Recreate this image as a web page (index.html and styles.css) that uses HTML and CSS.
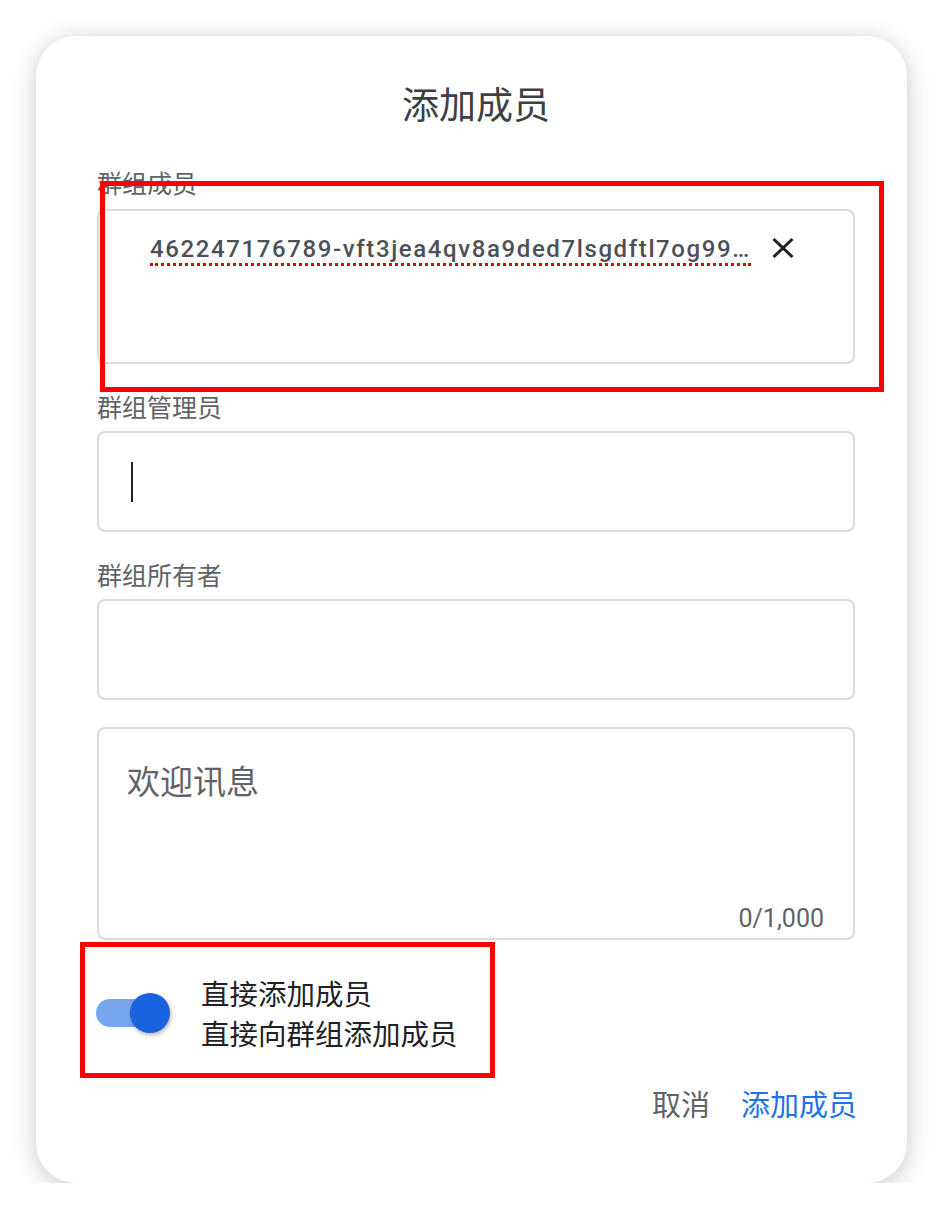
FILE: index.html
```html
<!DOCTYPE html>
<html>
<head>
    <meta charset="utf-8" />
    <title>添加成员</title>
    <meta name="viewport" content="width=device-width, initial-scale=1">
    <link rel="stylesheet" href="styles.css">
</head>
<body>
    <div id="addMember">
        <h2>添加成员</h2>

        <p class="label first">群组成员</p>
        <div class="box box-tall">
            <div class="chip">
                <span class="chip-text">462247176789-vft3jea4qv8a9ded7lsgdftl7og99…</span>
                <svg class="chip-close" width="22" height="20" viewBox="0 0 22 20">
                    <path d="M1.5 1 L20.5 19 M20.5 1 L1.5 19" stroke="#202124" stroke-width="3" fill="none"/>
                </svg>
            </div>
        </div>

        <p class="label">群组管理员</p>
        <div class="box box-focus">
            <span class="caret"></span>
        </div>

        <p class="label">群组所有者</p>
        <div class="box"></div>

        <div class="box box-area">
            <span class="placeholder">欢迎讯息</span>
            <span class="counter">0/1,000</span>
        </div>

        <div class="switch-row">
            <div class="switch">
                <span class="track"></span>
                <span class="knob"></span>
            </div>
            <div class="switch-text">
                <span>直接添加成员</span>
                <span>直接向群组添加成员</span>
            </div>
        </div>

        <div class="actions">
            <span class="btn">取消</span>
            <span class="btn btn-primary">添加成员</span>
        </div>
    </div>

    <!-- 标注框 -->
    <div class="mark mark-members"></div>
    <div class="mark mark-switch"></div>
</body>
</html>
```

FILE: styles.css
```css
body,h2,p{
    margin: 0;
}
body{
    background: #fff;
    font-family: "Noto Sans CJK SC", Roboto, sans-serif;
    color: #202124;
}
#addMember{
    box-sizing: border-box;
    margin: 36px 0 0 36px;
    padding: 43px 52px 0 61px;
    width: 871px;
    height: 1147px;
    background: #fff;
    border-radius: 40px;
    box-shadow: 0 4px 24px rgba(0,0,0,.22);
}
#addMember h2{
    font-size: 37px;
    font-weight: 400;
    line-height: 48px;
    text-align: center;
    color: #3c4043;
}
.label{
    margin: 26px 0 9px;
    font-size: 25px;
    line-height: 32px;
    color: #5f6368;
}
.label.first{
    margin: 39px 0 11px;
}
.box{
    box-sizing: border-box;
    height: 101px;
    border: 2px solid #dadce0;
    border-radius: 8px;
}
.box-tall{
    height: 155px;
    padding: 24px 0 0 51px;
}
.chip{
    display: flex;
    align-items: flex-start;
    gap: 21px;
}
.chip-text{
    font-family: Roboto, "Noto Sans CJK SC", sans-serif;
    font-size: 24px;
    font-weight: 500;
    letter-spacing: 1.6px;
    line-height: 28px;
    color: #4d5156;
    border-bottom: 3px dotted #d00;
}
.chip-close{
    margin-top: 3px;
}
.box-focus{
    display: flex;
    align-items: center;
    padding-left: 32px;
}
.caret{
    width: 2px;
    height: 40px;
    background: #202124;
}
.box-area{
    display: flex;
    flex-direction: column;
    justify-content: space-between;
    margin-top: 27px;
    height: 213px;
    padding: 31px 29px 5px 28px;
}
.placeholder{
    font-size: 33px;
    line-height: 40px;
    color: #5f6368;
}
.counter{
    align-self: flex-end;
    font-family: Roboto, sans-serif;
    font-size: 25px;
    line-height: 28px;
    color: #5f6368;
}
.switch-row{
    display: flex;
    align-items: center;
    gap: 31px;
    margin: 33px 0 0 -1px;
}
.switch{
    position: relative;
    width: 74px;
    height: 40px;
}
.switch .track{
    position: absolute;
    left: 0;
    top: 6px;
    width: 64px;
    height: 28px;
    border-radius: 14px;
    background: #78a6ee;
}
.switch .knob{
    position: absolute;
    left: 34px;
    top: 0;
    width: 40px;
    height: 40px;
    border-radius: 50%;
    background: #1a62e0;
    box-shadow: 1px 2px 4px rgba(0,0,0,.3);
}
.switch-text span{
    display: block;
    font-size: 28.5px;
    line-height: 40px;
    color: #202124;
}
.actions{
    display: flex;
    justify-content: flex-end;
    gap: 31px;
    margin: 30px -2px 0 0;
}
.btn{
    font-size: 29px;
    line-height: 40px;
    color: #5f6368;
    cursor: pointer;
}
.btn-primary{
    color: #1a73e8;
}
.mark{
    position: absolute;
    box-sizing: border-box;
    border: 5px solid #f00;
}
.mark-members{
    left: 100px;
    top: 181px;
    width: 784px;
    height: 211px;
}
.mark-switch{
    left: 80px;
    top: 942px;
    width: 415px;
    height: 136px;
}
```
